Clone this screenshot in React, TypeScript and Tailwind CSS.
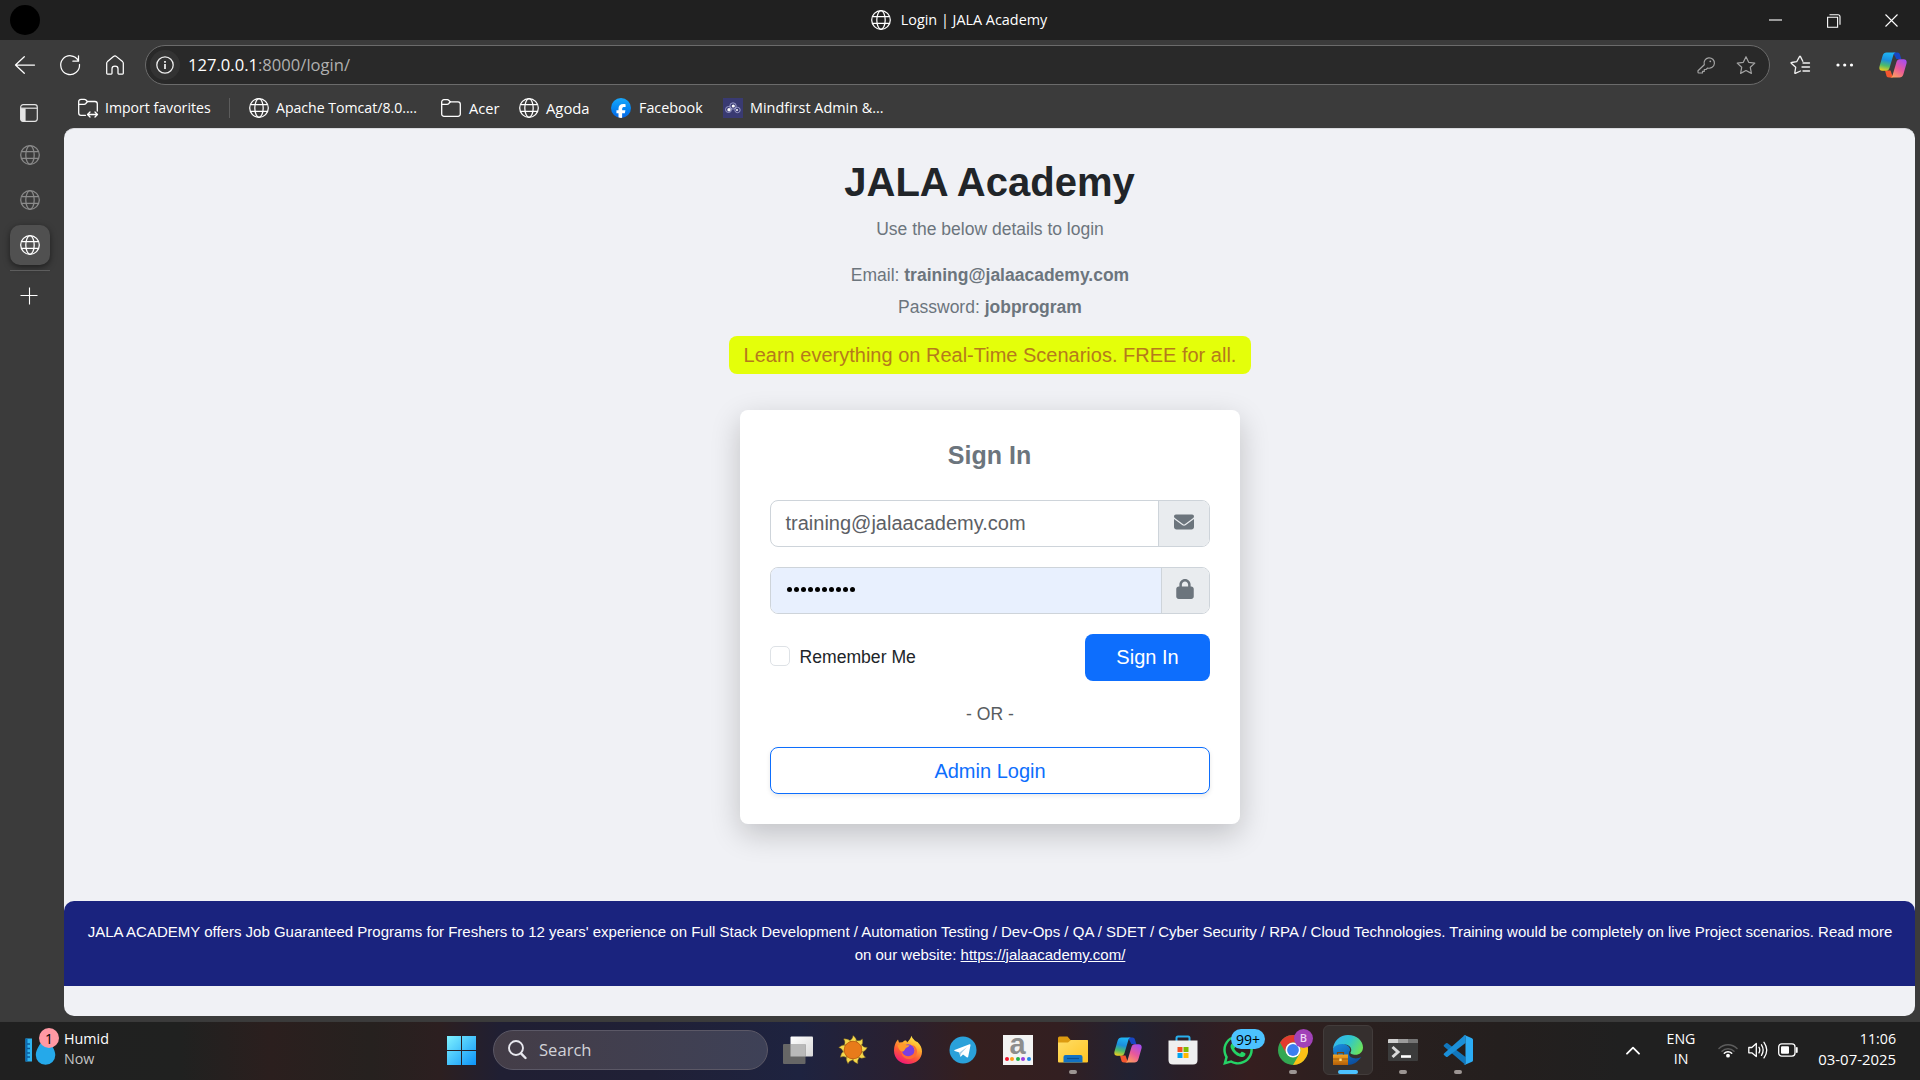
import React from 'react';
import { FaEnvelope, FaFacebookF, FaLock, FaWhatsapp } from 'react-icons/fa6';

const ui = "font-['Open_Sans','Noto_Sans',sans-serif]";

function T({ children, className = '' }: { children: React.ReactNode; className?: string }) {
  return <span className={`whitespace-nowrap ${className}`}>{children}</span>;
}

function Globe({ className = '' }: { className?: string }) {
  return (
    <svg width="20" height="20" viewBox="0 0 20 20" fill="none" stroke="currentColor" strokeWidth="1.25" className={`shrink-0 ${className}`}>
      <circle cx="10" cy="10" r="9.3" />
      <ellipse cx="10" cy="10" rx="4.2" ry="9.3" />
      <path d="M1.3 6.7h17.4M1.3 13.3h17.4" />
    </svg>
  );
}

function Folder({ sync = false }: { sync?: boolean }) {
  return (
    <svg width="20" height="20" viewBox="0 0 20 20" fill="none" stroke="currentColor" strokeWidth="1.3" strokeLinejoin="round" strokeLinecap="round" className="shrink-0 overflow-visible">
      <path d={sync ? 'M7.5 17.3H3A2.3 2.3 0 0 1 .7 15V3.6A2.3 2.3 0 0 1 3 1.3h3.4q.8 0 1.3.5l1.7 1.7H17a2.3 2.3 0 0 1 2.3 2.3V13' : 'M3 18.3A2.3 2.3 0 0 1 .7 16V4A2.3 2.3 0 0 1 3 1.7h3.4q.8 0 1.3.5l1.7 1.7H17a2.3 2.3 0 0 1 2.3 2.3V16a2.3 2.3 0 0 1-2.3 2.3z'} />
      <path d="M.9 6.3h5.2q.9 0 1.5-.6l1.7-1.9" />
      {sync && <path d="M10 16.500h9M12 14l-2.500 2.500L12 19M17 14l2.500 2.500L17 19" />}
    </svg>
  );
}

function Copilot({ id, size }: { id: string; size: number }) {
  return (
    <svg width={size} height={size} viewBox="0 0 28 28">
      <defs>
        <linearGradient id={`${id}a`} x1="0.4" y1="0" x2="0.2" y2="1">
          <stop offset="0" stopColor="#1fb4f4" /><stop offset=".4" stopColor="#1c8fdc" /><stop offset=".7" stopColor="#4dbb6a" /><stop offset="1" stopColor="#f2cf1d" />
        </linearGradient>
        <linearGradient id={`${id}b`} x1="0.8" y1="0" x2="0.2" y2="1">
          <stop offset="0" stopColor="#a64df0" /><stop offset=".5" stopColor="#e8589b" /><stop offset="1" stopColor="#ffa15c" />
        </linearGradient>
      </defs>
      <path d="M14 1.500h4.500c1.500 0 2 .8 2.400 2l1.400 4.500h-5z" fill="#1846c4" />
      <path d="M14 26.500H10c-1.800 0-2.300-1-2.700-2.300L6 19.500h5.500z" fill="#f4562f" />
      <path d="M7.600 1.500H17c-1.400 0-2.200 1-2.700 2.700l-3.700 12.500c-.6 2-1.600 3-3.400 3H3.300C.8 19.700-.1 18 .5 15.600L3.600 4.800C4.300 2.500 5.600 1.500 7.600 1.500z" fill={`url(#${id}a)`} />
      <path d="M20.400 26.500H11c1.400 0 2.200-1 2.700-2.700l3.700-12.500c.6-2 1.600-3 3.400-3h3.900c2.500 0 3.400 1.700 2.800 4.100l-3.100 10.800c-.7 2.300-2 3.300-4 3.300z" fill={`url(#${id}b)`} />
    </svg>
  );
}

function TitleBar() {
  return (
    <header className="grid h-10 grid-cols-[1fr_auto_1fr] items-center bg-[#202020]">
      <div className="ml-2.5 size-[30px] rounded-full bg-black" />
      <div className="flex items-center gap-2.5 pr-0.5">
        <Globe />
        <T className="text-[14.400px]">Login | JALA Academy</T>
      </div>
      <div className="flex justify-end">
        {['M3 9h13', 'M3.600 6.200h10v10h-10zM5.500 3.700h8.500q2 0 2 2v8', 'M3.500 3.500l12 12M15.500 3.500l-12 12'].map((d) => (
          <div key={d} className="flex h-10 w-[58px] items-center justify-center">
            <svg width="19" height="19" viewBox="0 0 19 19" fill="none" stroke="white" strokeWidth="1.1"><path d={d} /></svg>
          </div>
        ))}
      </div>
    </header>
  );
}

const star = 'M10 1.200l2.700 5.600 6.100.8-4.500 4.200 1.100 6.100L10 15l-5.400 2.900 1.100-6.100L1.200 7.600l6.100-.8z';

function Toolbar() {
  return (
    <div className="flex h-[49px] items-center">
      <svg width="145" height="40" viewBox="0 0 145 40" fill="none" stroke="white" strokeWidth="1.25" strokeLinecap="round" strokeLinejoin="round">
        <path d="M15.700 20H34.500M24.300 11.700L15.500 20l8.800 8.300" />
        <path d="M78.300 15.500a9.400 9.400 0 1 0 1.200 4M78.500 10.800v5.400h-5.600" />
        <path d="M106.700 28.200V18.300q0-1 .8-1.700l6-5q1.500-1.300 3 0l6 5q.8.700.8 1.700v9.900q0 .8-.8.8h-3.700q-.8 0-.8-.8v-4.500q0-2.700-3-2.700t-3 2.700v4.500q0 .8-.8.8h-3.700q-.8 0-.8-.8z" />
      </svg>
      <div className="flex h-10 w-[1625px] items-center rounded-full border border-[#6b6b6b] bg-[#292929] pl-1">
        <div className="flex size-[30px] items-center justify-center rounded-full bg-[#333333]">
          <svg width="18" height="18" viewBox="0 0 18 18" fill="none" stroke="#ededed" strokeWidth="1.300"><circle cx="9" cy="9" r="8.200" /><path d="M9 8v5" strokeWidth="1.800" /><path d="M9 5v1.800" strokeWidth="1.800" /></svg>
        </div>
        <T className="mt-px ml-2 text-[16.600px] text-[#b0b0b0]"><span className="text-white">127.0.0.1</span>:8000/login/</T>
        <svg className="mr-[10px] ml-auto" width="64" height="20" viewBox="0 0 64 20" fill="none" stroke="#a3a3a3" strokeWidth="1.200" strokeLinejoin="round">
          <path d="M9.300 9.700a5.200 5.200 0 1 1 3.400 3.300L11 14.500H9.300v1.800H7.500V18H3.800q-.8 0-.8-.8v-1.500z" /><circle cx="15.300" cy="6.300" r=".9" fill="#a3a3a3" stroke="none" />
          <path d={star} transform="translate(41 .5)" />
        </svg>
      </div>
      <svg className="ml-5" width="21" height="20" viewBox="0 0 21 20" fill="none" stroke="#f2f2f2" strokeWidth="1.300" strokeLinejoin="round" strokeLinecap="round">
        <path d="M10.500 16L5.300 18.400q-.6.200-.5-.5l.9-5.600L1.200 8.200q-.5-.6.300-.7l5.200-.8L9.500 1.600q.5-.7 1 0l2.300 4.700M13 8h6.500M12 12h7.500M13 16h6.500" />
      </svg>
      <svg className="ml-[25px]" width="18" height="6" viewBox="0 0 18 6" fill="white"><circle cx="2" cy="3" r="1.600" /><circle cx="8.700" cy="3" r="1.600" /><circle cx="15.500" cy="3" r="1.600" /></svg>
      <div className="ml-[25px]"><Copilot id="ct" size={28} /></div>
    </div>
  );
}

function Sidebar() {
  return (
    <aside className="flex w-16 flex-col items-center pt-[15px] pr-1">
      <svg width="18" height="18" viewBox="0 0 18 18" className="mr-0.5 shrink-0" fill="none" stroke="#e4e4e4" strokeWidth="1.200">
        <rect x=".7" y=".7" width="16.600" height="16.600" rx="2.500" /><path d="M.7 4.200h16.600" /><path d="M1 5h4v12H3q-2 0-2-2z" fill="#e4e4e4" />
      </svg>
      <Globe className="mt-[23px] text-[#8a8a8a]" />
      <Globe className="mt-[25px] text-[#8a8a8a]" />
      <div className="mt-[15px] flex size-10 shrink-0 items-center justify-center rounded-[10px] bg-[#505050] shadow-[0_2px_6px_rgba(0,0,0,0.5)]"><Globe /></div>
      <div className="mt-[5px] h-px w-10 shrink-0 bg-[#5d5d5d]" />
      <svg className="mt-4 mr-0.5 shrink-0" width="18" height="18" viewBox="0 0 18 18" stroke="white" strokeWidth="1.1"><path d="M9.500 .5v17M.5 8.500h17" /></svg>
    </aside>
  );
}

function Favorites() {
  return (
    <nav className="flex h-[39px] items-center pb-px text-[14.300px] leading-5">
      <div className="ml-3.5 flex w-[151px] items-center gap-[7px]"><Folder sync /><T className="text-[14.100px]">Import favorites</T></div>
      <div className="mr-[19px] h-5 w-px bg-[#5c5c5c]" />
      <div className="flex w-[192px] items-center gap-[7px]"><Globe /><T className="text-[14.100px]">Apache Tomcat/8.0....</T></div>
      <div className="flex w-[78px] items-center gap-[8px]"><Folder /><T className="-mt-px text-[14.600px]">Acer</T></div>
      <div className="flex w-[92px] items-center gap-[7px]"><Globe /><T className="-mt-px text-[14.800px]">Agoda</T></div>
      <div className="flex w-[112px] items-center gap-[8px]">
        <span className="flex size-5 items-end justify-center overflow-hidden rounded-full bg-gradient-to-b from-[#19a8fb] to-[#0866e8]"><FaFacebookF size={16} color="white" className="translate-y-[2px]" /></span>
        <T>Facebook</T>
      </div>
      <div className="flex items-center gap-[7px]">
        <svg width="20" height="20" viewBox="0 0 20 20"><rect width="20" height="20" fill="#393a72" /><g fill="none" stroke="#a9abd8" strokeWidth=".8"><circle cx="5.500" cy="11.500" r="3" /><circle cx="10" cy="8" r="3.200" /><circle cx="14.500" cy="12" r="2.700" /></g><circle cx="6" cy="11.800" r="1.700" fill="white" /><circle cx="10.300" cy="8" r="1.600" fill="white" /><circle cx="14" cy="12" r="1" fill="white" /></svg>
        <T className="text-[14.400px]">Mindfirst Admin &amp;...</T>
      </div>
    </nav>
  );
}

function LoginPage() {
  return (
    <main className="flex h-[888px] w-[1851px] flex-col items-center overflow-hidden rounded-[10px] border-t border-[#d9dade] bg-[#f0f1f5] font-['Liberation_Sans',sans-serif] text-[#6c757d]">
      <h1 className="mt-[29px] text-[40px] leading-[48px] font-bold text-[#212529]"><T>JALA Academy</T></h1>
      <p className="mt-[9px] pl-px text-[17.500px] leading-[28px]"><T>Use the below details to login</T></p>
      <p className="mt-[16px] pl-px text-[17.500px] leading-[32px]"><T>Email: <b>training@jalaacademy.com</b></T></p>
      <p className="pl-px text-[17.500px] leading-[32px]"><T>Password: <b>jobprogram</b></T></p>
      <div className="mt-[13px] flex h-[38px] w-[522px] items-center justify-center rounded-lg bg-[#e4ff0a] pl-px text-[20px] text-[#b57a1c]"><T>Learn everything on Real-Time Scenarios. FREE for all.</T></div>
      <section className="mt-9 flex h-[414px] w-[500px] shrink-0 flex-col rounded-lg bg-white px-[30px] shadow-[0_10px_30px_rgba(0,0,0,0.2)]">
        <h2 className="mt-[30px] text-center text-[25px] leading-[30px] font-bold"><T>Sign In</T></h2>
        <div className="mt-[30px] flex h-[47px] items-stretch overflow-hidden rounded-lg border border-[#ced4da]">
          <div className="flex grow items-center border-r border-[#ced4da] pb-[2px] pl-[15px] text-[20px] text-[#5c6065]"><T>training@jalaacademy.com</T></div>
          <div className="flex w-[50px] items-center justify-center bg-[#e9ecef] pb-[3px]"><FaEnvelope size={20} /></div>
        </div>
        <div className="mt-5 flex h-[47px] items-stretch overflow-hidden rounded-lg border border-[#ced4da]">
          <div className="flex grow items-center gap-[2px] border-r border-[#ced4da] bg-[#e8f0fe] pb-0.5 pl-4">
            {Array.from({ length: 10 }, (_, i) => <span key={i} className="size-[5px] rounded-full bg-black" />)}
          </div>
          <div className="flex w-[47px] items-center justify-center bg-[#e9ecef] pb-[3px]"><FaLock size={20} /></div>
        </div>
        <div className="mt-5 flex h-[47px] items-center">
          <span className="mb-1 size-5 rounded-[5px] border border-[#dee2e6]" />
          <span className="ml-2.5 text-[17.600px] text-[#212529]"><T>Remember Me</T></span>
          <span className="ml-auto flex h-[47px] w-[125px] items-center justify-center rounded-lg bg-[#0d6efd] pb-px pl-px text-[20px] text-white"><T>Sign In</T></span>
        </div>
        <p className="mt-[19px] h-[28px] pl-px text-center text-[17.600px] leading-[28px] text-[#585c60]"><T>- OR -</T></p>
        <div className="mt-[19px] flex h-[47px] items-center justify-center rounded-lg border border-[#0d6efd] pl-px text-[20px] text-[#0d6efd] shadow-[0_2px_5px_rgba(0,0,0,0.09)]"><T>Admin Login</T></div>
      </section>
      <footer className="mt-[77px] flex h-[85px] w-full shrink-0 flex-col items-center rounded-t-[10px] bg-[#1a237e] pt-[19px] pl-px text-[15px] leading-[23px] text-white">
        <T>JALA ACADEMY offers Job Guaranteed Programs for Freshers to 12 years' experience on Full Stack Development / Automation Testing / Dev-Ops / QA / SDET / Cyber Security / RPA / Cloud Technologies. Training would be completely on live Project scenarios. Read more</T>
        <T>on our website: <u>https://jalaacademy.com/</u></T>
      </footer>
    </main>
  );
}

function Cell({ children, dot = false }: { children: React.ReactNode; dot?: boolean }) {
  return (
    <div className="relative flex h-[58px] w-[55px] items-center justify-center">
      {children}
      {dot && <span className="absolute bottom-[5px] left-6 h-1 w-2 rounded-full bg-[#9c9593]" />}
    </div>
  );
}

function Sun() {
  return (
    <svg width="30" height="30" viewBox="0 0 30 30">
      {Array.from({ length: 9 }, (_, i) => (
        <path key={i} d="M11 6Q15 4 15 .5Q19 3.500 18.500 7z" fill="#f5d94c" stroke="#8a6a1a" strokeWidth=".4" transform={`rotate(${i * 40} 15 15)`} />
      ))}
      <circle cx="15" cy="15" r="8.800" fill="#e87b1a" stroke="#c96310" strokeWidth=".8" />
    </svg>
  );
}

function Firefox() {
  return (
    <svg width="30" height="30" viewBox="0 0 30 30">
      <defs>
        <linearGradient id="ff" x1=".8" y1="0" x2=".3" y2="1"><stop offset="0" stopColor="#fff44f" /><stop offset=".35" stopColor="#ffb02e" /><stop offset=".65" stopColor="#ff5a36" /><stop offset="1" stopColor="#f0147a" /></linearGradient>
      </defs>
      <path d="M18.500 .8c.3 2 1.800 3.200 3.200 4.600 1 .8 1.800 1.200 2.800 1.600 3 3 4.500 6 4.500 9.500C29 24 23 29 15 29S1 23.500 1 15.500C1 11 2.500 7.500 3.800 6L5 4.500l1 3 3.500-.2C10.500 6 12 5.600 13 5.600c0 0 1 .8 1 2 1.500-1.500 3.500-3.500 4.500-6.800z" fill="url(#ff)" />
      <circle cx="15.300" cy="15.600" r="6.300" fill="#7b3fe0" />
      <path d="M4.500 10.500c3-2 5.500-1.800 7-1 1.500 1 4 .7 5 .8-.5 1.800-2.500 2-3.500 2.700-1.500 1-1.200 3.200-3.200 3.500-2 .2-3.500-1-5.300-6z" fill="#ff9a2b" />
      <path d="M8.500 16c1 3.500 4 5.500 7 5.200 3.500-.4 6.500-2.600 6.200-6.500-.3-2.200-1.500-3.700-3-4.700 3.500.5 5.500 3.500 5.300 7-.4 4.500-4.500 7.500-9 7-4.500-.6-6.800-4-6.500-8z" fill="#ff6a35" />
    </svg>
  );
}

function Chrome() {
  return (
    <svg width="30" height="30" viewBox="0 0 30 30">
      <circle cx="15" cy="15" r="15" fill="#33a852" />
      <path d="M15 0A15 15 0 0 1 28 7.500H15A7.500 7.500 0 0 0 8.500 18.700L2 7.500A15 15 0 0 1 15 0z" fill="#e33b2e" />
      <path d="M28 7.500A15 15 0 0 1 15 30L21.500 18.700A7.500 7.500 0 0 0 15 7.500z" fill="#fbc116" />
      <circle cx="15" cy="15" r="7.500" fill="white" /><circle cx="15" cy="15" r="5.900" fill="#3c7ef0" />
    </svg>
  );
}

function Edge() {
  return (
    <svg width="30" height="30" viewBox="0 0 30 30">
      <defs>
        <linearGradient id="eg" x1="0" y1=".2" x2="1" y2=".6"><stop offset="0" stopColor="#36b4f2" /><stop offset=".5" stopColor="#2fc6cf" /><stop offset="1" stopColor="#6be35a" /></linearGradient>
        <linearGradient id="eb" x1="0" y1="0" x2=".6" y2="1"><stop offset="0" stopColor="#1a8fe0" /><stop offset="1" stopColor="#0c4f9f" /></linearGradient>
        <linearGradient id="ec" x1="0" y1="0" x2="0" y2="1"><stop offset="0" stopColor="#f5a623" /><stop offset="1" stopColor="#b55f08" /></linearGradient>
      </defs>
      <path d="M0 14C2 9.500 7 8 11 9c4.500 1.200 6.500 4 6 6.500-2 2.500-1.500 7 4 7.800 3 .4 5.500-.4 7.300-1.300C25 27 20 30 15 30 6 30 0 23 0 14z" fill="url(#eb)" />
      <path d="M0 14C.5 6 7 0 15 0c9 0 15 6 15 12.500 0 4.500-3.500 7.300-7.500 7.300-3.500 0-5.500-1.300-5-2.300 1.800-2.500.5-6-3-7.500C9 7.800 2.500 9.500 0 14z" fill="url(#eg)" />
      <rect x="0" y="19.500" width="15" height="10.500" fill="url(#ec)" /><path d="M4.500 19.500v-1.800h6v1.800" fill="none" stroke="#7d4406" strokeWidth="1.200" /><path d="M0 24h15" stroke="#8a4c08" strokeWidth=".8" /><rect x="6.300" y="23.500" width="2.400" height="2.500" fill="#ffe08a" />
    </svg>
  );
}

function Taskbar() {
  return (
    <div className="flex h-[59px] items-start bg-[linear-gradient(90deg,#202020_0,#202120_180px,#2b1f1e_270px,#26211f_370px,#2c1f20_440px,#201f33_500px,#202036_650px,#1e2340_800px,#2a2030_900px,#351f1f_970px,#331f21_1060px,#212233_1130px,#2a1f28_1180px,#351e1f_1250px,#2a201f_1350px,#241f1e_1500px,#202020_1620px)] shadow-[inset_0_1px_0_#3a3a3a]">
      <div className="flex h-[58px] w-[447px] items-center pl-6">
        <div className="relative h-10 w-10">
          <svg width="34" height="40" viewBox="0 0 34 40">
            <path d="M1.500 8.500H8v23H1.500z" fill="#2fb4f0" /><path d="M1.500 8.500h2v23h-2z" fill="#0c6cb5" /><path d="M3 14h3M3 18.500h3M3 23h3M3 27h3" stroke="#0c5c9c" strokeWidth="1.300" />
            <path d="M21.500 6c5 7.500 9.800 13.500 9.800 19a9.700 9.700 0 0 1-19.500 0c0-5.500 4.700-11.500 9.700-19z" fill="#25a9ea" />
          </svg>
          <span className="absolute -top-[2px] left-[15px] flex size-5 items-center justify-center rounded-full bg-[#ff99a4] text-[14px] text-black">1</span>
        </div>
        <div className="pb-0.5 text-[14.300px] leading-5"><div><T>Humid</T></div><div className="text-[#c4c4c4]"><T>Now</T></div></div>
      </div>
      <svg className="mt-[15px]" width="29" height="29" viewBox="0 0 29 29">
        <defs><linearGradient id="win" gradientUnits="userSpaceOnUse" x1="0" y1="0" x2="29" y2="29"><stop offset="0" stopColor="#7ff2ff" /><stop offset="1" stopColor="#0c93f8" /></linearGradient></defs>
        <path d="M0 0h14v14H0zM15 0h14v14H15zM0 15h14v14H0zM15 15h14v14H15z" fill="url(#win)" />
      </svg>
      <div className="mt-[9px] ml-[17px] flex h-10 w-[275px] items-center rounded-full border border-[#5b5866] bg-gradient-to-r from-[#443d47] to-[#3e4157] text-[16.600px] text-[#d2d2d8]">
        <svg className="ml-3.5" width="19" height="20" viewBox="0 0 19 20" fill="none" stroke="#e8e8ee" strokeWidth="1.900" strokeLinecap="round"><circle cx="8" cy="8" r="7" /><path d="M13 13.300l4.500 4.700" strokeWidth="2.400" /></svg>
        <T className="ml-3">Search</T>
      </div>
      <div className="ml-0.5 flex">
        <Cell>
          <svg width="30" height="28" viewBox="0 0 30 28"><defs><linearGradient id="tv" x1="0" y1="0" x2="1" y2="1"><stop offset="0" stopColor="white" /><stop offset="1" stopColor="#d8d8d8" /></linearGradient></defs><rect x="7.500" y=".5" width="22.500" height="20" rx="1" fill="url(#tv)" /><rect x="0" y="8" width="22.500" height="20" rx="1" fill="#666" /><rect x="7.500" y="8" width="15" height="12.500" fill="#b9b9b9" /></svg>
        </Cell>
        <Cell><Sun /></Cell>
        <Cell><Firefox /></Cell>
        <Cell>
          <svg width="28" height="28" viewBox="0 0 28 28"><circle cx="14" cy="14" r="13.500" fill="#2aa1da" /><path d="M5.500 14L20.500 8.200q1.200-.3 1 1l-2.300 11.500q-.4 1.200-1.500.6l-3.700-2.800-2 2q-.7.500-.9-.5l-.8-3.500L5.700 15q-1-.5-.2-1z" fill="white" /><path d="M10.500 16.500l7.500-5.500-5.800 6.500-.4 3z" fill="#a9cfe6" /></svg>
        </Cell>
        <Cell>
          <div className="flex size-[30px] flex-col items-center bg-[#f3f3f3] font-['Liberation_Sans',sans-serif]">
            <span className="h-[22px] text-[29px] leading-[18px] font-bold text-[#8d8d8d]">a</span>
            <span className="flex gap-[1.500px]">
              <i className="size-1 rounded-full bg-[#f0142d]" /><i className="size-1 rounded-full bg-[#ff9d1e]" /><i className="size-1 rounded-full bg-[#22b14c]" /><i className="size-1 rounded-full bg-[#9a3fe0]" /><i className="size-1 rounded-full bg-[#1e88e5]" />
            </span>
          </div>
        </Cell>
        <Cell dot>
          <svg width="30" height="28" viewBox="0 0 30 28"><defs><linearGradient id="fo" x1="0" y1="0" x2="1" y2="1"><stop offset="0" stopColor="#ffdd66" /><stop offset="1" stopColor="#ffc423" /></linearGradient></defs><path d="M0 2q0-1.500 1.500-1.500h8L12.500 4H29q1 0 1 1v6H0z" fill="#dd9b10" /><path d="M0 6.500h10L13 4h16q1 0 1 1v20.500q0 1-1 1H1q-1 0-1-1z" fill="url(#fo)" /><path d="M5.500 26.500V21q0-2 2-2h15q2 0 2 2v5.500z" fill="#1272c4" /><path d="M9 22.500h12" stroke="#0a4f92" strokeWidth="1.200" /></svg>
        </Cell>
        <Cell><Copilot id="cb" size={28} /></Cell>
        <Cell>
          <svg width="30" height="30" viewBox="0 0 30 30"><path d="M8.500 6V3q0-1.500 1.500-1.500h10q1.500 0 1.500 1.500v3" fill="none" stroke="#29b0ee" strokeWidth="2" /><path d="M.5 5.500h29V25q0 4.500-4.500 4.500H5Q.5 29.500.5 25z" fill="#efefef" /><path d="M9.500 12h5v5h-5z" fill="#f25022" /><path d="M15.500 12h5v5h-5z" fill="#7fba00" /><path d="M9.500 18h5v5h-5z" fill="#00a4ef" /><path d="M15.500 18h5v5h-5z" fill="#ffb900" /></svg>
        </Cell>
        <Cell>
          <FaWhatsapp size={34} color="#25d366" />
          <span className="absolute top-2 left-[21px] flex h-5 w-[34px] items-center justify-center rounded-full bg-[#4cc2ff] text-[14px] text-black"><T>99+</T></span>
        </Cell>
        <Cell dot>
          <Chrome />
          <span className="absolute top-[8px] left-[29px] flex size-[19px] items-center justify-center rounded-full bg-[#a142b8] text-[11px] font-semibold text-[#eed5f3]">B</span>
        </Cell>
        <Cell>
          <span className="absolute top-1 left-[3px] size-[50px] rounded-md border border-[#423c3b] bg-[#352f2e]" />
          <span className="relative"><Edge /></span>
          <span className="absolute bottom-[5px] left-[18px] h-1 w-5 rounded-full bg-[#4cc2ff]" />
        </Cell>
        <Cell dot>
          <svg width="30" height="22" viewBox="0 0 30 22"><rect width="30" height="22" rx="1" fill="#3c3c3c" /><path d="M0 4V1q0-1 1-1h9v4z" fill="#cfcfcf" /><path d="M10 0h10v4H10z" fill="#9b9b9b" /><path d="M20 0h9q1 0 1 1v3H20z" fill="#757575" /><path d="M4.500 8l5.500 5-5.500 5" fill="none" stroke="#d9d9d9" strokeWidth="3" /><path d="M13 17.500h10" stroke="white" strokeWidth="2.600" /></svg>
        </Cell>
        <Cell dot>
          <svg width="30" height="30" viewBox="0 0 30 30"><path d="M1 11.500q-.8-.8 0-1.500l2-1.800q.8-.6 1.600 0L22.500 22v7.500q-.8-.2-1.400-.8z" fill="#1177bd" /><path d="M22.500 8L4.600 21.800q-.8.600-1.600 0L1 20q-.8-.8 0-1.500L21 .8q.8-.7 1.500-.5z" fill="#1b8fd8" /><path d="M22 .3L29 3.300q1 .5 1 1.500v20.400q0 1-1 1.500l-7 3q-1 .1-1.500-.8 2 1 2-1V2q0-2-2-1 .5-.8 1.500-.7z" fill="#2bacf5" /></svg>
        </Cell>
      </div>
      <div className="mr-6 ml-auto flex h-[58px] items-center">
        <svg width="14" height="9" viewBox="0 0 14 9" fill="none" stroke="white" strokeWidth="1.800" strokeLinecap="round" strokeLinejoin="round"><path d="M1 7.700l6-6 6 6" /></svg>
        <div className="ml-[13px] w-14 pb-0.5 text-center text-[14.200px] leading-5"><div>ENG</div><div>IN</div></div>
        <svg className="ml-[9px]" width="20" height="16" viewBox="0 0 20 16" fill="none" strokeWidth="1.500" strokeLinecap="round"><path d="M1 6.500a12.500 12.500 0 0 1 18 0" stroke="#5c5c5c" /><path d="M4 9.300a8.300 8.300 0 0 1 12 0" stroke="#5c5c5c" /><path d="M6.300 11.300a5.200 5.200 0 0 1 7.400 0" stroke="white" /><circle cx="10" cy="13.700" r="1.900" fill="white" /></svg>
        <svg className="ml-2.5" width="20" height="18" viewBox="0 0 20 18" fill="none" stroke="white" strokeWidth="1.300" strokeLinecap="round" strokeLinejoin="round"><path d="M.8 6.500h3L8.300 2.500v13L3.800 11.800h-3z" /><path d="M11 6.300q1.600 2.800 0 5.600M13.500 3.800q3.300 5.300 0 10.600M16 1.300q5.500 7.800 0 15.600" /></svg>
        <svg className="ml-2.5" width="20" height="14" viewBox="0 0 20 14" fill="none" stroke="white" strokeWidth="1.300"><rect x=".7" y=".9" width="16.300" height="12.200" rx="3" /><rect x="3" y="3.200" width="8" height="7.600" rx="1" fill="white" stroke="none" /><path d="M18.800 5v4" strokeWidth="1.800" strokeLinecap="round" /></svg>
        <div className="w-[98px] pb-0.5 text-right leading-5"><div className="text-[14.200px]">11:06</div><div><T className="text-[14.900px]">03-07-2025</T></div></div>
      </div>
    </div>
  );
}

export default function App() {
  return (
    <div className={`h-[1080px] w-[1920px] overflow-hidden bg-[#3b3b3b] text-white ${ui}`}>
      <TitleBar />
      <Toolbar />
      <div className="flex h-[932px]">
        <Sidebar />
        <div><Favorites /><LoginPage /></div>
      </div>
      <Taskbar />
    </div>
  );
}
